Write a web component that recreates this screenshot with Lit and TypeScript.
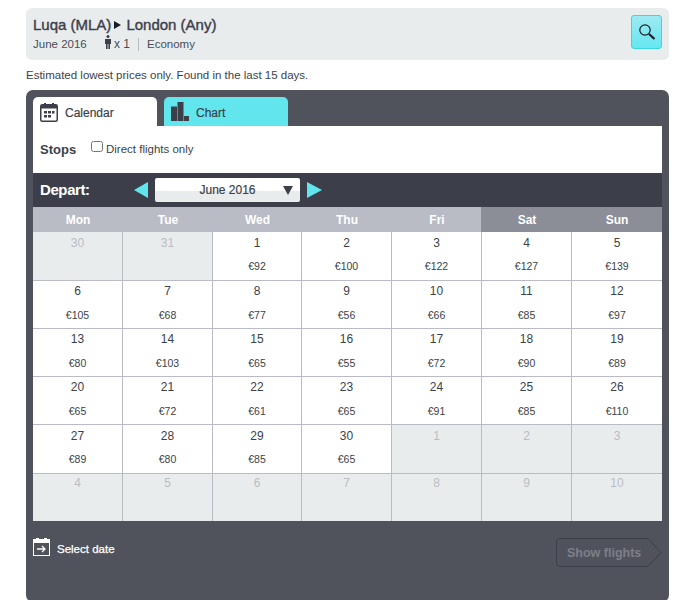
import { LitElement, html, css } from "lit";
import { customElement } from "lit/decorators.js";

type Cell = { d: number; p?: string; off?: boolean };
const off = (d: number): Cell => ({ d, off: true });
const on = (d: number, p: number): Cell => ({ d, p: "€" + p });
const cells: Cell[] = [
  off(30), off(31), on(1, 92), on(2, 100), on(3, 122), on(4, 127), on(5, 139),
  on(6, 105), on(7, 68), on(8, 77), on(9, 56), on(10, 66), on(11, 85), on(12, 97),
  on(13, 80), on(14, 103), on(15, 65), on(16, 55), on(17, 72), on(18, 90), on(19, 89),
  on(20, 65), on(21, 72), on(22, 61), on(23, 65), on(24, 91), on(25, 85), on(26, 110),
  on(27, 89), on(28, 80), on(29, 85), on(30, 65), off(1), off(2), off(3),
  off(4), off(5), off(6), off(7), off(8), off(9), off(10),
];
const days = ["Mon", "Tue", "Wed", "Thu", "Fri", "Sat", "Sun"];

@customElement("app-root")
export class AppRoot extends LitElement {
  static styles = css`
    :host { display: block; width: 700px; height: 600px; overflow: hidden; background: #fff;
      font-family: "Liberation Sans", Arial, sans-serif; color: #3c3f4a; }
    .page { padding: 8px 31px 0 26px; }
    .summary { height: 52px; box-sizing: border-box; background: #e9eced; border-radius: 6px;
      display: flex; justify-content: space-between; align-items: flex-start; padding: 7px 7px 0 7px; }
    .route { font-size: 15px; line-height: 20px; -webkit-text-stroke: 0.4px #3c3f4a; display: flex; align-items: center; }
    .route .arr { width: 0; height: 0; border-left: 7px solid #1c1c22; border-top: 4px solid transparent; border-bottom: 4px solid transparent; margin: 0 5px 0 3px; }
    .meta { display: flex; align-items: center; font-size: 11.5px; line-height: 16px; margin-top: 1px; color: #4a4d57; }
    .month { width: 72px; }
    .meta svg { margin-right: 3px; margin-top: -5px; }
    .times { font-size: 12px; }
    .sep { width: 1px; height: 13px; background: #b9bcc4; margin: 0 8px; }
    .search { width: 31px; height: 34px; box-sizing: border-box; border: 1px solid #3fd3e6; border-radius: 3px;
      background: linear-gradient(#9deaf2, #66e7f0); display: flex; align-items: center; justify-content: center; }
    .note { font-size: 11.5px; line-height: 14px; margin: 8px 0; color: #3c3f4a; }
    .panel { height: 512px; background: #50535c; border-radius: 7px; padding: 7px 7px 0; box-sizing: border-box; }
    .tabs { display: flex; gap: 7px; height: 29px; }
    .tab { width: 124px; box-sizing: border-box; padding-left: 7px; border-radius: 5px 5px 0 0; display: flex; align-items: center; font-size: 12px; -webkit-text-stroke: 0.2px #3c3f4a; }
    .tab.cal { background: #fff; }
    .tab.chart { background: #62e6ee; }
    .tab svg { margin-right: 7px; }
    .tab span { padding-top: 2px; }
    .stops { background: #fff; height: 47px; box-sizing: border-box; display: flex; align-items: center; padding: 0 7px 1px; }
    .stops b { font-size: 13px; font-weight: 700; width: 51px; }
    .box { width: 12px; height: 11px; box-sizing: border-box; border: 1px solid #767676; border-radius: 2.5px; background: #fff; margin-right: 3px; margin-top: -5px; }
    .stops span { font-size: 11.5px; }
    .bar { background: #3c3f4a; height: 34px; display: flex; align-items: center; padding-left: 7px; }
    .bar b { color: #fff; font-size: 15px; letter-spacing: -0.4px; width: 94px; padding-bottom: 2px; }
    .tri-l { width: 0; height: 0; border-right: 14px solid #62e6ee; border-top: 8px solid transparent; border-bottom: 8px solid transparent; margin-right: 7px; }
    .tri-r { width: 0; height: 0; border-left: 15px solid #62e6ee; border-top: 8px solid transparent; border-bottom: 8px solid transparent; margin-left: 7px; }
    .select { width: 145px; height: 24px; box-sizing: border-box; border-radius: 2px; background: linear-gradient(#fff 0, #fff 55%, #e9eced 55%, #e9eced 100%);
      display: flex; align-items: center; justify-content: center; font-size: 12px; -webkit-text-stroke: 0.2px #3c3f4a; position: relative; }
    .select i { position: absolute; right: 7px; top: 8px; width: 0; height: 0; border-top: 9px solid #3c3f4a; border-left: 5.5px solid transparent; border-right: 5.5px solid transparent; }
    .cal-grid { display: grid; grid-template-columns: 90px 90px 89px 90px 90px 90px 90px;
      grid-template-rows: 25px 49px 48px 48px 48px 49px 47px; width: 629px; }
    .hd { background: #b9bcc4; color: #fff; font-size: 12px; font-weight: 700; display: flex; align-items: center; justify-content: center; }
    .hd.we { background: #8b8e96; }
    .hd.sat { box-shadow: -1px 0 0 #8b8e96; }
    .c { box-sizing: border-box; border-right: 1px solid #b9bcc4; border-bottom: 1px solid #b9bcc4; background: #fff; text-align: center; padding-top: 3px; }
    .c.tall { padding-top: 4px; }
    .c.low { padding-top: 2px; border-bottom: 0; }
    .c.last { border-right: 0; }
    .c.off { background: #e9eced; }
    .n { font-size: 12px; line-height: 14px; color: #3c3f4a; }
    .c.off .n { color: #b9bcc4; }
    .p { font-size: 10.5px; line-height: 12px; padding-top: 11px; color: #3c3f4a; }
    .c.tall .p { padding-top: 10px; }
    .foot { display: flex; justify-content: space-between; padding-top: 17px; align-items: flex-start; }
    .sel { display: flex; align-items: center; color: #fff; font-size: 11.5px; -webkit-text-stroke: 0.25px #fff; }
    .sel svg { margin-right: 7px; margin-top: -1px; }
    .sel span { margin-top: 4px; }
    .show { width: 106px; height: 29px; position: relative; }
    .show svg { display: block; }
    .show span { position: absolute; left: 11px; top: 8px; font-size: 12.5px; font-weight: 700; color: #7c7f88; line-height: 14px; white-space: nowrap; }
  `;

  render() {
    return html`<div class="page">
      <div class="summary">
        <div>
          <div class="route">Luqa (MLA)<span class="arr"></span>London (Any)</div>
          <div class="meta">
            <span class="month">June 2016</span>
            <svg width="6" height="14" viewBox="0 0 6 14"><circle cx="3" cy="1.5" r="1.5" fill="#3c3f4a"/><path d="M0 4h6v5H5v5H3.400V9h-.8v5H1V9H0z" fill="#3c3f4a"/></svg>
            <span class="times">x 1</span><span class="sep"></span><span>Economy</span>
          </div>
        </div>
        <div class="search">
          <svg width="18" height="18" viewBox="0 0 18 18" fill="none"><circle cx="7" cy="7" r="5.200" stroke="#1c1c22" stroke-width="1.200"/><path d="M11 11l5.500 5" stroke="#1c1c22" stroke-width="2.200"/></svg>
        </div>
      </div>
      <div class="note">Estimated lowest prices only. Found in the last 15 days.</div>
      <div class="panel">
        <div class="tabs">
          <div class="tab cal">
            <svg width="18" height="20" viewBox="0 0 18 20" fill="none"><rect x=".75" y="2.750" width="16.500" height="16.500" rx="1.500" stroke="#3c3f4a" stroke-width="1.500"/><path d="M1 3h16v3.500H1z" fill="#3c3f4a"/><path d="M4 1h2v3H4zM12 1h2v3h-2z" fill="#3c3f4a"/><path d="M4 9h3v2.500H4zM8 9h3v2.500H8zM12 9h2.500v2.500H12zM4 13h3v2.500H4zM8 13h3v2.500H8z" fill="#3c3f4a"/></svg>
            <span>Calendar</span>
          </div>
          <div class="tab chart">
            <svg width="18" height="20" viewBox="0 0 18 20"><path d="M0 4.500h6V19H0zM6.500 0h6v19h-6zM13 14h5v5h-5z" fill="#3c3f4a"/></svg>
            <span>Chart</span>
          </div>
        </div>
        <div class="stops"><b>Stops</b><span class="box"></span><span>Direct flights only</span></div>
        <div class="bar">
          <b>Depart:</b>
          <span class="tri-l"></span>
          <div class="select">June 2016<i></i></div>
          <span class="tri-r"></span>
        </div>
        <div class="cal-grid">
          ${days.map((d, i) => html`<div class="hd ${i >= 5 ? "we" : ""} ${i === 5 ? "sat" : ""}">${d}</div>`)}
          ${cells.map((c, i) => {
            const row = Math.floor(i / 7);
            const cls = [
              "c",
              c.off ? "off" : "",
              i % 7 === 6 ? "last" : "",
              row === 0 || row === 4 ? "tall" : "",
              row === 5 ? "low" : "",
            ].join(" ");
            return html`<div class="${cls}"><div class="n">${c.d}</div>${c.p ? html`<div class="p">${c.p}</div>` : ""}</div>`;
          })}
        </div>
        <div class="foot">
          <div class="sel">
            <svg width="17" height="19" viewBox="0 0 17 19" fill="none"><rect x=".5" y="2.500" width="16" height="16" stroke="#fff"/><path d="M1 3h15v3H1z" fill="#fff"/><path d="M3 1h3v2H3zM11 1h3v2h-3z" fill="#fff"/><path d="M4 12h8M9 9l3 3-3 3" stroke="#fff" stroke-width="1.300"/></svg>
            <span>Select date</span>
          </div>
          <div class="show">
            <svg width="106" height="29" viewBox="0 0 106 29" fill="none"><path d="M4 .5h88l13 14-13 14H4Q.5 28.500.5 25V4Q.5.500 4 .5z" stroke="#3c3f4a"/></svg>
            <span>Show flights</span>
          </div>
        </div>
      </div>
    </div>`;
  }
}
